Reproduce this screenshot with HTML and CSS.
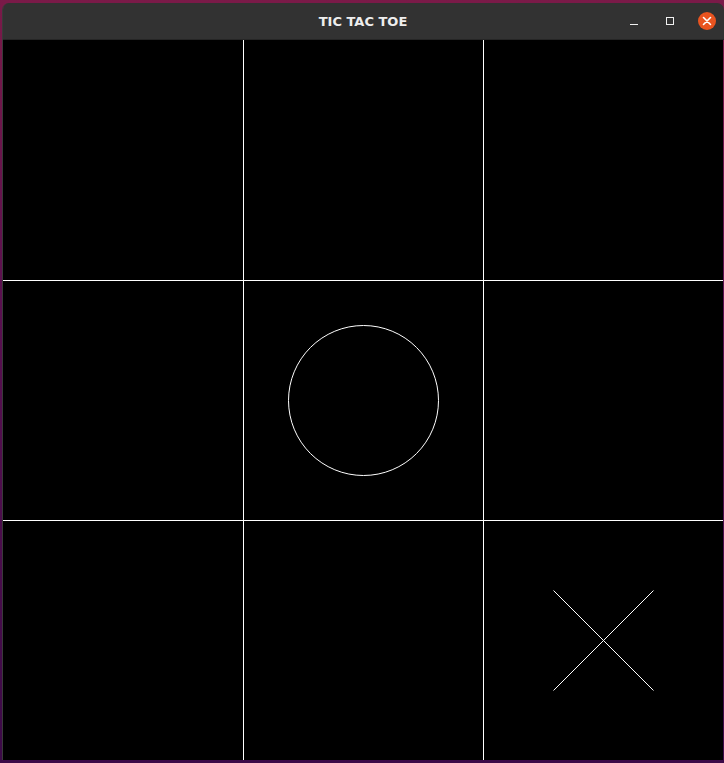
FILE: index.html
```html
<!DOCTYPE html>
<html>
<head>
<meta charset="utf-8">
<link rel="stylesheet" href="styles.css">
</head>
<body>
<div class="window">
  <div class="titlebar">
    <span class="title">TIC TAC TOE</span>
    <div class="controls">
      <span class="btn min"></span>
      <span class="btn max"></span>
      <span class="btn close">
        <svg width="18" height="18" viewBox="0 0 18 18"><path d="M5.5 5.5 L12.5 12.5 M12.5 5.5 L5.5 12.5" stroke="#fff" stroke-width="1.6" stroke-linecap="round"/></svg>
      </span>
    </div>
  </div>
  <svg class="board" width="720" height="720" viewBox="0 0 720 720">
    <g stroke="#fff" stroke-width="1" shape-rendering="crispEdges">
      <line x1="240.5" y1="0" x2="240.5" y2="720"/>
      <line x1="480.5" y1="0" x2="480.5" y2="720"/>
      <line x1="0" y1="240.5" x2="720" y2="240.5"/>
      <line x1="0" y1="480.5" x2="720" y2="480.5"/>
    </g>
    <circle cx="360.5" cy="360.5" r="75" fill="none" stroke="#fff" stroke-width="1"/>
    <g stroke="#fff" stroke-width="1">
      <line x1="550.5" y1="550.5" x2="650.5" y2="650.5"/>
      <line x1="650.5" y1="550.5" x2="550.5" y2="650.5"/>
    </g>
  </svg>
</div>
</body>
</html>
```
FILE: styles.css
```css
html, body {
  margin: 0;
  padding: 0;
}
body {
  width: 724px;
  height: 763px;
  overflow: hidden;
  background: linear-gradient(180deg, #7a1a48 0%, #5a1050 40%, #3c0a48 100%);
  padding: 3px 0 0 2px;
  box-sizing: border-box;
}
.window {
  width: 721px;
  display: flex;
  flex-direction: column;
  border-left: 1px solid #3a3a3a;
  border-radius: 7px 7px 0 0;
  overflow: hidden;
}
.titlebar {
  height: 37px;
  background: #323232;
  position: relative;
  display: flex;
  align-items: center;
  justify-content: center;
  border-bottom: 1px solid #262626;
  box-sizing: border-box;
}
.title {
  font-family: "DejaVu Sans", "Noto Sans", sans-serif;
  font-weight: bold;
  font-size: 13px;
  color: #eeeeee;
  margin-top: 1px;
  margin-right: 1px;
}
.controls {
  position: absolute;
  right: 8px;
  top: 0;
  bottom: 0;
  display: flex;
  align-items: center;
  gap: 16px;
}
.btn {
  display: block;
}
.min {
  width: 8px;
  height: 1px;
  background: #f0f0f0;
  margin-top: 6px;
}
.max {
  width: 6px;
  height: 6px;
  border: 1.3px solid #f0f0f0;
  margin-left: 12px;
}
.close {
  width: 18px;
  height: 18px;
  border-radius: 50%;
  background: #e95420;
  margin-left: 8px;
}
.close svg {
  display: block;
}
.board {
  display: block;
  background: #000;
}
```
